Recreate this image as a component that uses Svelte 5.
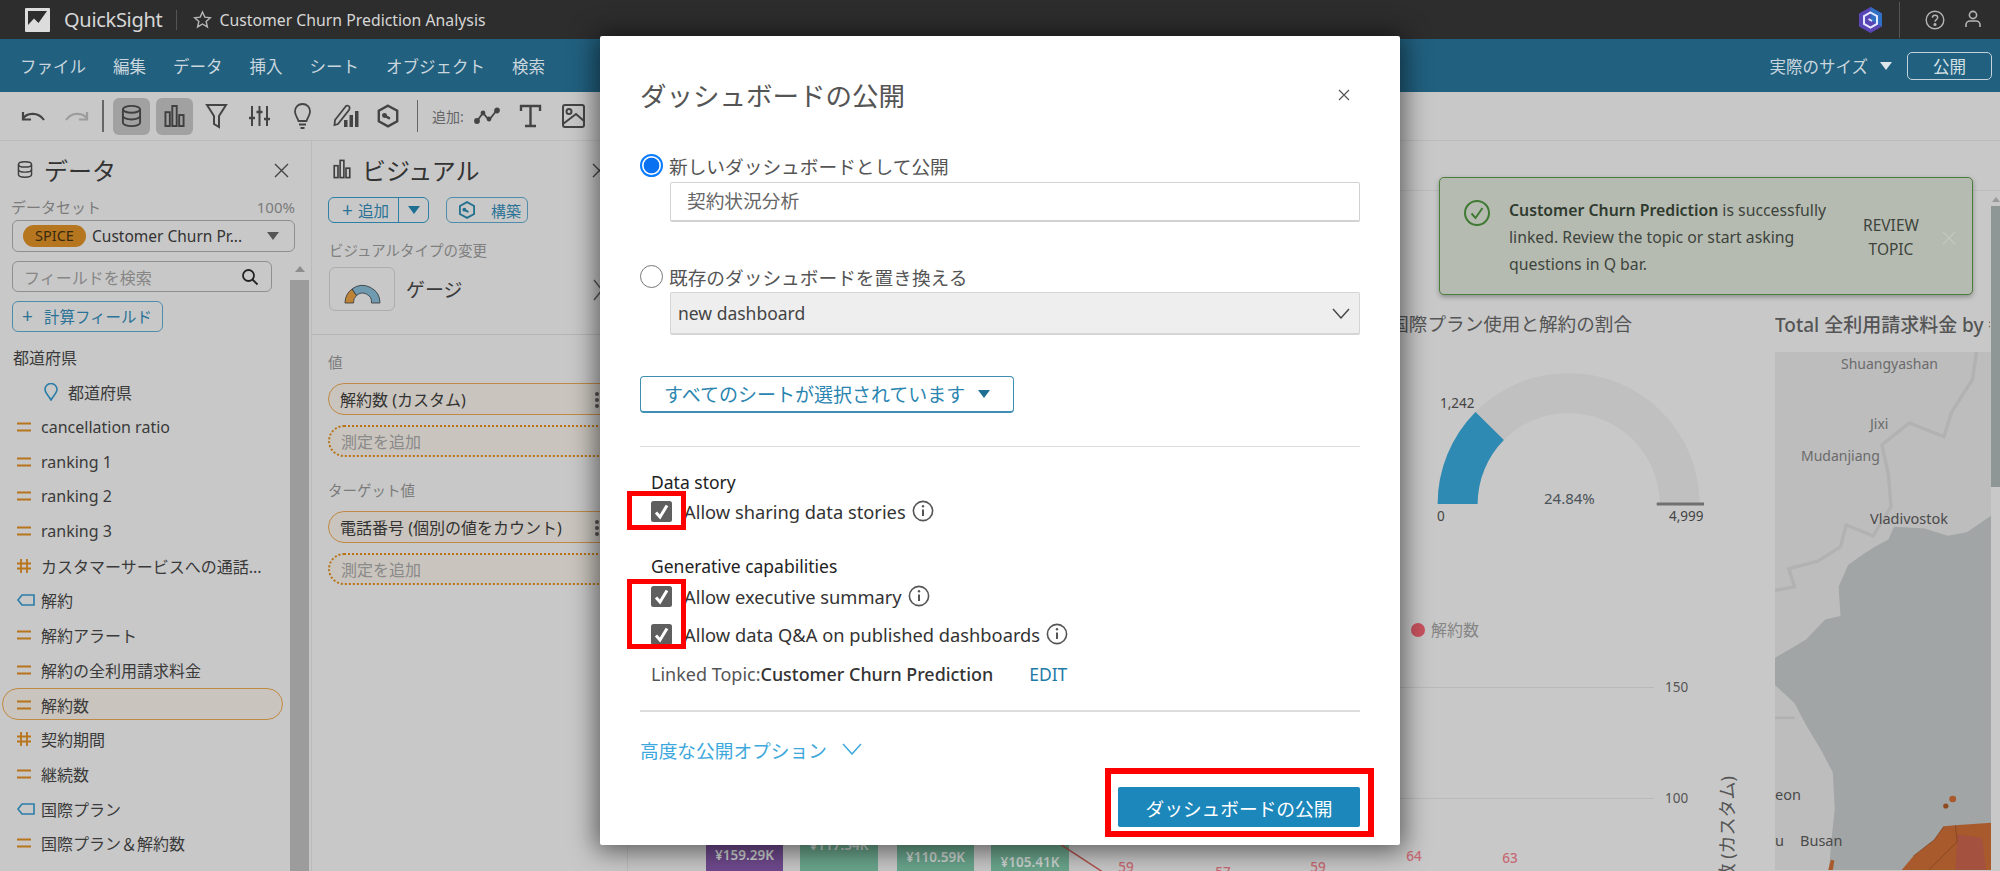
<script lang="ts">
  type Kind = 'pin' | 'eq' | 'hash' | 'tag'
  type Field = { kind: Kind; label: string; on?: boolean; sub?: boolean }

  const MENU = ['ファイル', '編集', 'データ', '挿入', 'シート', 'オブジェクト', '検索']

  const FIELDS: Field[] = [
    { kind: 'pin', label: '都道府県', sub: true },
    { kind: 'eq', label: 'cancellation ratio' },
    { kind: 'eq', label: 'ranking 1' },
    { kind: 'eq', label: 'ranking 2' },
    { kind: 'eq', label: 'ranking 3' },
    { kind: 'hash', label: 'カスタマーサービスへの通話...' },
    { kind: 'tag', label: '解約' },
    { kind: 'eq', label: '解約アラート' },
    { kind: 'eq', label: '解約の全利用請求料金' },
    { kind: 'eq', label: '解約数', on: true },
    { kind: 'hash', label: '契約期間' },
    { kind: 'eq', label: '継続数' },
    { kind: 'tag', label: '国際プラン' },
    { kind: 'eq', label: '国際プラン＆解約数' },
  ]

  // page coordinates, the canvas subtracts its own origin
  const BARS = [
    { x: 706, w: 77, c: '#6f4a8e', t: '¥159.29K', ty: 856 },
    { x: 800, w: 78, c: '#6aa58c', t: '¥117.54K', ty: 846 },
    { x: 897, w: 77, c: '#6aa58c', t: '¥110.59K', ty: 858 },
    { x: 991, w: 78, c: '#6aa58c', t: '¥105.41K', ty: 863 },
  ]
  const POINTS = [
    { x: 1126, y: 868, t: '59' },
    { x: 1223, y: 873, t: '57' },
    { x: 1318, y: 868, t: '59' },
    { x: 1414, y: 857, t: '64' },
    { x: 1510, y: 859, t: '63' },
  ]
  const AXIS = [
    { y: 688, t: '150' },
    { y: 799, t: '100' },
  ]
  const PLACES = [
    { x: 1841, y: 364, t: 'Shuangyashan', big: false },
    { x: 1870, y: 424, t: 'Jixi', big: false },
    { x: 1801, y: 456, t: 'Mudanjiang', big: false },
    { x: 1870, y: 519, t: 'Vladivostok', big: true },
    { x: 1775, y: 795, t: 'eon', big: true },
    { x: 1775, y: 841, t: 'u', big: true },
    { x: 1800, y: 841, t: 'Busan', big: true },
  ]
  const OX = 627
  const OY = 142
</script>

{#snippet hexIcon(size: number, color: string)}
  <svg width={size} height={size} viewBox="0 0 24 24" fill="none" stroke={color} stroke-width="2.2">
    <path d="M12 2.5 20.5 7.2v9.6L12 21.5 3.5 16.8V7.2z" />
    <path d="M8.5 11.5 13 14" stroke-linecap="round" />
    <circle cx="8.8" cy="11.6" r="1.2" fill={color} />
  </svg>
{/snippet}

{#snippet dbIcon(w: number, h: number)}
  <svg width={w} height={h} viewBox="0 0 22 24" fill="none" stroke="#3f3f3f" stroke-width="2">
    <ellipse cx="11" cy="5" rx="9" ry="3.6" />
    <path d="M2 5v14c0 2 4 3.6 9 3.6s9-1.6 9-3.6V5" />
    <path d="M2 12c0 2 4 3.6 9 3.6s9-1.6 9-3.6" />
  </svg>
{/snippet}

{#snippet barsIcon(w: number, h: number)}
  <svg width={w} height={h} viewBox="0 0 22 24" fill="none" stroke="#3f3f3f" stroke-width="2">
    <rect x="1.5" y="8" width="4.6" height="14.5" />
    <rect x="8.7" y="1.5" width="4.6" height="21" />
    <rect x="15.9" y="11" width="4.6" height="11.5" />
  </svg>
{/snippet}

{#snippet info()}
  <svg class="info" width="22" height="22" viewBox="0 0 22 22" fill="none" stroke="#555" stroke-width="1.6">
    <circle cx="11" cy="11" r="9.6" />
    <path d="M11 9.5v6.5" stroke-width="2" />
    <circle cx="11" cy="6.2" r="1.2" fill="#555" stroke="none" />
  </svg>
{/snippet}

{#snippet check()}
  <svg class="check" width="21" height="21" viewBox="0 0 21 21">
    <rect width="21" height="21" rx="2.5" fill="#5f5f5f" />
    <path d="M5 11.5 9 16 16 4.5" fill="none" stroke="#fff" stroke-width="3" />
  </svg>
{/snippet}

<div class="page">
  <header class="topbar">
    <svg class="logo" width="25" height="24" viewBox="0 0 25 24">
      <rect width="25" height="24" rx="1" fill="#dcdcdc" />
      <path d="M3 3h19L13.500 15 9 10.500 3 17z" fill="#2d2d2d" />
    </svg>
    <span class="brand">QuickSight</span>
    <span class="tsep"></span>
    <svg class="star" width="19" height="19" viewBox="0 0 24 24" fill="none" stroke="#b5b5b5" stroke-width="1.8">
      <path d="M12 2.500 14.900 9l7 .7-5.300 4.700 1.600 7L12 17.700 5.800 21.400l1.600-7L2.100 9.700l7-.7z" />
    </svg>
    <span class="doc">Customer Churn Prediction Analysis</span>
    <div class="top-right">
      <svg width="23" height="26" viewBox="0 0 23 26">
        <path d="M11.500 0 23 6.500v13L11.500 26 0 19.500v-13z" fill="#5a45b5" />
        <path d="M11.500 0 23 6.500v13l-11.500-6.500z" fill="#2f6fc4" />
        <path d="M11.500 5.500 18 9.200v7.600l-6.500 3.700L5 16.800V9.200z" fill="none" stroke="#e4e8ff" stroke-width="2" />
        <path d="M9.500 12 13 14" stroke="#e4e8ff" stroke-width="2" />
      </svg>
      <span class="tsep right"></span>
      <svg class="help" width="20" height="20" viewBox="0 0 20 20" fill="none" stroke="#b5b5b5" stroke-width="1.4">
        <circle cx="10" cy="10" r="8.800" />
        <path d="M7.400 7.800c0-1.500 1.200-2.500 2.700-2.500s2.600 1 2.600 2.300c0 2-2.700 2-2.700 4.200" />
        <circle cx="10" cy="14.500" r=".9" fill="#b5b5b5" />
      </svg>
      <svg class="user" width="18" height="20" viewBox="0 0 18 20" fill="none" stroke="#b5b5b5" stroke-width="1.6">
        <circle cx="9" cy="5" r="3.600" />
        <path d="M2 17v-2c0-2.500 2-4 4-4h6c2 0 4 1.500 4 4v2" />
      </svg>
    </div>
  </header>

  <nav class="menu">
    {#each MENU as m}<span>{m}</span>{/each}
    <span class="size">実際のサイズ</span>
    <i class="caret white"></i>
    <span class="publish">公開</span>
  </nav>

  <div class="toolbar">
    <svg class="slot" width="43" height="22" viewBox="0 0 43 22" fill="none" stroke="#444" stroke-width="2.2">
      <path d="M11 14c3-6 15-8 21 1" /><path d="M11 7v7.500h8" />
    </svg>
    <svg class="slot" width="43" height="22" viewBox="0 0 43 22" fill="none" stroke="#9c9c9c" stroke-width="2.2">
      <path d="M32 14c-3-6-15-8-21 1" /><path d="M32 7v7.500h-8" />
    </svg>
    <span class="vsep"></span>
    <span class="tool-on">{@render dbIcon(21, 24)}</span>
    <span class="tool-on second">{@render barsIcon(21, 24)}</span>
    <svg class="slot" width="43" height="26" viewBox="0 0 43 26" fill="none" stroke="#444" stroke-width="2">
      <path d="M12 2h19l-7 11v11l-5-3v-8z" />
    </svg>
    <svg class="slot" width="43" height="24" viewBox="0 0 43 24" fill="none" stroke="#444" stroke-width="2">
      <path d="M14 2v20M21.500 2v20M29 2v20" /><path d="M11 14h6M18.500 8h6M26 15h6" stroke-width="2.400" />
    </svg>
    <svg class="slot" width="43" height="28" viewBox="0 0 43 28" fill="none" stroke="#444" stroke-width="1.800">
      <path d="M21.500 2c-4.500 0-7.500 3.400-7.500 7.500 0 4 2.500 6 3.500 9.500h8c1-3.500 3.500-5.500 3.500-9.500C29 5.400 26 2 21.500 2z" />
      <path d="M18 22.500h7M19.500 26h4" />
    </svg>
    <svg class="slot" width="43" height="26" viewBox="0 0 43 26" fill="none" stroke="#444" stroke-width="1.800">
      <path d="M11 17 22 3c1-1 3 0 3.500 1s0 2-.5 3L14 21l-3.500 1z" />
      <rect x="20" y="17" width="3.500" height="7" fill="#444" stroke="none" />
      <rect x="25.500" y="12" width="3.500" height="12" fill="#444" stroke="none" />
      <rect x="31" y="8" width="3.500" height="16" fill="#444" stroke="none" />
    </svg>
    <span class="slot hex">{@render hexIcon(26, '#444')}</span>
    <span class="vsep two"></span>
    <span class="add-label">追加:</span>
    <svg class="slot first-add" width="43" height="18" viewBox="0 0 43 18" fill="none" stroke="#444" stroke-width="1.800">
      <path d="M11 14 17 6l6 7 8-10" />
      <circle cx="11" cy="14" r="2" fill="#444" /><circle cx="17" cy="6" r="1.500" fill="#444" /><circle cx="23" cy="12" r="1.500" fill="#444" /><circle cx="31" cy="3.500" r="2" fill="#444" />
    </svg>
    <svg class="slot" width="43" height="24" viewBox="0 0 43 24" fill="none" stroke="#444" stroke-width="2.400">
      <path d="M12 7V2h19v5M21.500 2v20M16 22h11" />
    </svg>
    <svg class="slot" width="43" height="26" viewBox="0 0 43 26" fill="none" stroke="#444" stroke-width="2">
      <rect x="11" y="2" width="21" height="22" rx="2" />
      <circle cx="17" cy="8.500" r="2.500" />
      <path d="M11 21 24 11l8 7" />
    </svg>
  </div>

  <main class="work">
    <aside class="data">
      <div class="pane-head">
        <span class="head-icon">{@render dbIcon(16, 19)}</span>
        <h2>データ</h2>
        <svg class="x" width="15" height="15" viewBox="0 0 15 15" stroke="#444" stroke-width="1.400"><path d="M1 1l13 13M14 1 1 14" /></svg>
      </div>
      <div class="ds-label"><span>データセット</span><span>100%</span></div>
      <div class="ds-select">
        <span class="spice">SPICE</span>
        <span class="ds-name">Customer Churn Pr...</span>
        <i class="caret gray"></i>
      </div>
      <div class="scroll-row">
        <div class="field-col">
          <div class="search">
            <span>フィールドを検索</span>
            <svg width="18" height="18" viewBox="0 0 18 18" fill="none" stroke="#222" stroke-width="1.800"><circle cx="7.500" cy="7.500" r="5.500" /><path d="m11.500 11.500 5 5" /></svg>
          </div>
          <div class="calc"><b>+</b><span>計算フィールド</span></div>
          <div class="group">都道府県</div>
          {#each FIELDS as f}
            <div class="row" class:on={f.on} class:sub={f.sub}>
              <span class="ficon">
                {#if f.kind === 'pin'}
                  <svg width="14" height="18" viewBox="0 0 14 18" fill="none" stroke="#2a7ea8" stroke-width="1.600"><path d="M7 17C4 12 1 9.500 1 6.500a6 6 0 0 1 12 0C13 9.500 10 12 7 17z" /></svg>
                {:else if f.kind === 'eq'}
                  <svg width="14" height="10" viewBox="0 0 14 10" stroke="#b8741a" stroke-width="2"><path d="M0 1.500h14M0 8.500h14" /></svg>
                {:else if f.kind === 'hash'}
                  <svg width="14" height="14" viewBox="0 0 14 14" stroke="#b8741a" stroke-width="1.800"><path d="M0 4.500h14M0 9.500h14M4 0v14M10 0v14" /></svg>
                {:else}
                  <svg width="18" height="12" viewBox="0 0 18 12" fill="none" stroke="#2a7ea8" stroke-width="1.600"><path d="M17 1H5L1 6l4 5h12z" /></svg>
                {/if}
              </span>
              <span>{f.label}</span>
            </div>
          {/each}
        </div>
        <div class="scrollbar"><i></i><b></b></div>
      </div>
    </aside>

    <section class="visual">
      <div class="pane-head vis">
        <span class="head-icon">{@render barsIcon(18, 20)}</span>
        <h2>ビジュアル</h2>
        <svg class="x" width="15" height="15" viewBox="0 0 15 15" stroke="#444" stroke-width="1.400"><path d="M1 1l13 13M14 1 1 14" /></svg>
      </div>
      <div class="vis-actions">
        <div class="split">
          <span class="split-main"><b>+</b> 追加</span>
          <span class="split-drop"><i class="caret teal"></i></span>
        </div>
        <div class="build">{@render hexIcon(20, '#23708f')}<span>構築</span></div>
      </div>
      <div class="vis-type-label">ビジュアルタイプの変更</div>
      <div class="vis-type">
        <div class="tile">
          <svg width="37" height="21" viewBox="0 0 37 21">
            <path d="M1 20A17.500 17.500 0 0 1 8 6l4.500 6.500A9 9 0 0 0 9.500 20z" fill="#bd8437" stroke="#333" stroke-width=".8" />
            <path d="M8 6A17.500 17.500 0 0 1 36 20h-8.500a9 9 0 0 0-15-7.500z" fill="#6f9ab0" stroke="#333" stroke-width=".8" />
          </svg>
        </div>
        <span class="type-name">ゲージ</span>
        <svg class="chev" width="10" height="22" viewBox="0 0 10 22" fill="none" stroke="#555" stroke-width="1.400"><path d="m1 1 8 10-8 10" /></svg>
      </div>
      <div class="wells">
        <div class="well-label">値</div>
        <div class="pill"><span>解約数 (カスタム)</span><i class="dots"></i></div>
        <div class="pill-add">測定を追加</div>
        <div class="well-label target">ターゲット値</div>
        <div class="pill"><span>電話番号 (個別の値をカウント)</span><i class="dots"></i></div>
        <div class="pill-add">測定を追加</div>
      </div>
    </section>

    <section class="canvas">
      <div class="canvas-strip"></div>
      <span class="canvas-edge"></span>

      {#each BARS as b}
        <div class="bar" style="left:{b.x - OX}px;width:{b.w}px;background:{b.c}"></div>
        <span class="bar-text" style="left:{b.x - OX}px;width:{b.w}px;top:{b.ty - OY}px">{b.t}</span>
      {/each}
      <svg class="trend" width="60" height="40" viewBox="0 0 60 40" fill="none" stroke="#b0544f" stroke-width="1.500"><path d="M0 0 58 38" /></svg>
      {#each POINTS as p}
        <span class="point" style="left:{p.x - OX}px;top:{p.y - OY}px">{p.t}</span>
      {/each}

      <h3 class="gauge-title">国際プラン使用と解約の割合</h3>
      <svg class="gauge" width="290" height="150" viewBox="1425 365 290 150">
        <path d="M1437.600 505A131 131 0 0 1 1699.600 505H1659.600A91 91 0 0 0 1477.600 505z" fill="#c0c0c0" />
        <path d="M1437.600 505A131 131 0 0 1 1475.500 412.900L1503.900 441A91 91 0 0 0 1477.600 505z" fill="#2e8ab2" />
        <path d="M1656.700 505H1704" stroke="#707070" stroke-width="3" />
      </svg>
      <span class="gauge-num first">1,242</span>
      <span class="gauge-num zero">0</span>
      <span class="gauge-num pct">24.84%</span>
      <span class="gauge-num max">4,999</span>

      <span class="legend-dot"></span>
      <span class="legend-text">解約数</span>

      {#each AXIS as a}
        <span class="grid-line" style="top:{a.y - OY}px"></span>
        <span class="axis-num" style="top:{a.y - OY}px">{a.t}</span>
      {/each}
      <span class="axis-title">解約数 (カスタム)</span>

      <h3 class="map-title">Total 全利用請求料金 by 都道府県</h3>
      <svg class="map" width="216" height="518" viewBox="979 145 564 1423" preserveAspectRatio="none">
        <rect x="979" y="145" width="564" height="1423" fill="#bdbdbd" />
        <path d="M1505 145 1495 220 1440 310 1420 378 1330 340 1258 400 1275 480 1282 570 1235 650 1165 620 1150 680 1090 720 1015 740 1030 790 979 800" fill="none" stroke="#b2b2b2" stroke-width="9" />
        <path d="M1543 595 1480 640 1430 650 1370 630 1290 625 1275 660 1240 680 1210 700 1170 730 1145 790 1150 870 1110 880 1060 935 1020 960 979 985V1060L1030 1110 1060 1170 1100 1240 1130 1300 1135 1400 1125 1500 1120 1568H1543z" fill="#a2a5a5" />
        <path d="M979 1150H1030" stroke="#b0b0b0" stroke-width="7" />
        <path d="M1543 1438 1450 1445 1420 1448 1395 1485 1340 1530 1310 1568H1543z" fill="#a85a2c" />
        <path d="M1455 1470 1520 1480 1530 1568H1450z" fill="#a5513f" />
        <path d="M1420 1448 1395 1485 1340 1530M1450 1445 1455 1490 1380 1568" fill="none" stroke="#7d431f" stroke-width="2" />
        <circle cx="1443" cy="1373" r="9" fill="#a85a2c" />
        <circle cx="1425" cy="1392" r="7" fill="#8f4a20" />
        <path d="M1118 1568 1125 1540 1134 1542 1130 1568z" fill="#a85a2c" />
      </svg>
      {#each PLACES as p}
        <span class="place" class:big={p.big} style="left:{p.x - OX}px;top:{p.y - OY}px">{p.t}</span>
      {/each}
      <div class="page-scroll"><i></i><b></b></div>

      <div class="toast">
        <svg width="26" height="26" viewBox="0 0 26 26" fill="none" stroke="#3f7a33" stroke-width="2">
          <circle cx="13" cy="13" r="12" />
          <path d="m7.500 13.500 4 4.500 7-10" />
        </svg>
        <p><b>Customer Churn Prediction</b> is successfully linked. Review the topic or start asking questions in Q bar.</p>
        <span class="review">REVIEW TOPIC</span>
        <svg class="toast-x" width="14" height="14" viewBox="0 0 14 14" stroke="#c3c8c0" stroke-width="1.200"><path d="m1 1 12 12M13 1 1 13" /></svg>
      </div>
    </section>
  </main>

  <div class="modal">
    <div class="modal-head">
      <h1>ダッシュボードの公開</h1>
      <svg width="12" height="12" viewBox="0 0 12 12" stroke="#555" stroke-width="1.200"><path d="m1 1 10 10M11 1 1 11" /></svg>
    </div>

    <label class="radio-line"><span class="radio picked"></span>新しいダッシュボードとして公開</label>
    <div class="text-input">契約状況分析</div>

    <label class="radio-line second"><span class="radio"></span>既存のダッシュボードを置き換える</label>
    <div class="select-input">
      <span>new dashboard</span>
      <svg width="18" height="11" viewBox="0 0 18 11" fill="none" stroke="#444" stroke-width="1.400"><path d="m1 1 8 9 8-9" /></svg>
    </div>

    <div class="sheets"><span>すべてのシートが選択されています</span><i class="caret teal"></i></div>

    <hr class="first-rule" />

    <div class="opts">
      <div class="opt-title">Data story</div>
      <div class="opt">{@render check()}<span>Allow sharing data stories</span>{@render info()}</div>
      <div class="opt-title gen">Generative capabilities</div>
      <div class="opt">{@render check()}<span>Allow executive summary</span>{@render info()}</div>
      <div class="opt next">{@render check()}<span>Allow data Q&amp;A on published dashboards</span>{@render info()}</div>
      <div class="linked">
        <span class="lt">Linked Topic:</span><span class="ln">Customer Churn Prediction</span>
        <span class="edit">EDIT</span>
      </div>
    </div>

    <hr class="second-rule" />

    <div class="advanced">
      <span>高度な公開オプション</span>
      <svg width="20" height="12" viewBox="0 0 20 12" fill="none" stroke="#3ea8dc" stroke-width="1.500"><path d="m1 1 9 10 9-10" /></svg>
    </div>

    <div class="actions"><span class="go">ダッシュボードの公開</span></div>

    <span class="mark one"></span>
    <span class="mark two"></span>
    <span class="mark three"></span>
  </div>
</div>

<style>
  :global(body) { margin: 0; background: #c8c8c8; }
  .page {
    position: relative;
    width: 2000px;
    height: 871px;
    overflow: hidden;
    background: #c8c8c8;
    color: #3a3a3a;
    font-family: "Noto Sans", "Noto Sans CJK JP", sans-serif;
    font-size: 16px;
    display: flex;
    flex-direction: column;
  }

  .topbar {
    height: 39px;
    flex: none;
    background: #2d2d2d;
    display: flex;
    align-items: center;
    color: #d6d6d6;
  }
  .logo { margin-left: 25px; }
  .brand { margin-left: 14px; font-size: 20px; letter-spacing: -.3px; }
  .tsep { width: 1px; height: 20px; background: #555; margin-left: 14px; }
  .star { margin-left: 16px; }
  .doc { margin-left: 7px; font-size: 15.800px; }
  .top-right { margin-left: auto; display: flex; align-items: center; padding-right: 18px; }
  .tsep.right { height: 36px; margin-left: 17px; }
  .help { margin-left: 25px; }
  .user { margin-left: 19px; }

  .menu {
    height: 53px;
    flex: none;
    background: #21607f;
    display: flex;
    align-items: center;
    gap: 27px;
    padding-left: 20px;
    color: #c9d6dd;
    font-size: 16.500px;
    box-sizing: border-box;
  }
  .size { margin-left: auto; margin-right: -15px; }
  .publish {
    width: 85px;
    height: 28px;
    border: 1px solid #c3d3dc;
    border-radius: 5px;
    box-sizing: border-box;
    display: flex;
    align-items: center;
    justify-content: center;
    margin: 0 8px 0 -12px;
    color: #d6e0e6;
  }
  .caret { display: inline-block; width: 0; height: 0; border-left: 6.500px solid transparent; border-right: 6.500px solid transparent; border-top: 8px solid; }
  .caret.white { color: #dfe7eb; }
  .caret.gray { color: #555; }
  .caret.teal { color: #1f6f92; }

  .toolbar {
    height: 49px;
    flex: none;
    display: flex;
    align-items: center;
    padding-left: 12px;
    box-sizing: border-box;
    border-bottom: 1px solid #bcbcbc;
  }
  .slot { width: 43px; flex: none; display: flex; justify-content: center; }
  .vsep { width: 1.500px; height: 32px; background: #666; margin: 0 9px 0 4px; flex: none; }
  .vsep.two { margin: 0 14px 0 7px; }
  .tool-on {
    width: 37px;
    height: 37px;
    border-radius: 6px;
    background: #a1a1a1;
    display: flex;
    align-items: center;
    justify-content: center;
    flex: none;
  }
  .tool-on.second { margin: 0 2px 0 6px; }
  .add-label { font-size: 14px; color: #666; width: 34px; }
  .first-add { margin-left: 0; }

  .work { flex: 1; display: flex; min-height: 0; }

  .pane-head { height: 56px; display: flex; align-items: center; padding-left: 17px; position: relative; }
  .pane-head h2 { margin: 0 0 0 11px; font-size: 24px; font-weight: 400; color: #333; }
  .head-icon { display: flex; }
  .x { position: absolute; left: 274px; top: 22px; }

  .data { width: 312px; flex: none; box-sizing: border-box; border-right: 1px solid #bbb; }
  .ds-label {
    display: flex;
    justify-content: space-between;
    width: 284px;
    margin-left: 11px;
    font-size: 15px;
    height: 23px;
    line-height: 20px;
    color: #7b7b7b;
  }
  .ds-select {
    margin-left: 12px;
    width: 283px;
    height: 32px;
    box-sizing: border-box;
    border: 1px solid #8f8f8f;
    border-radius: 6px;
    display: flex;
    align-items: center;
    padding-left: 10px;
  }
  .spice {
    width: 63px;
    height: 22px;
    line-height: 21px;
    text-align: center;
    border-radius: 11px;
    background: #b5761f;
    font-size: 14.500px;
    color: #3a2a10;
    flex: none;
  }
  .ds-name { margin-left: 6px; font-size: 15.500px; color: #333; flex: 1; white-space: nowrap; }
  .ds-select .caret { margin-right: 15px; }

  .scroll-row { display: flex; margin-top: 9px; height: 610px; overflow: hidden; }
  .field-col { width: 290px; flex: none; }
  .search {
    margin-left: 12px;
    width: 260px;
    height: 31px;
    box-sizing: border-box;
    border: 1px solid #8f8f8f;
    border-radius: 6px;
    display: flex;
    align-items: center;
    justify-content: space-between;
    padding: 0 12px 0 11px;
    color: #868686;
    font-size: 16px;
  }
  .calc {
    margin: 9px 0 0 12px;
    width: 151px;
    height: 31px;
    box-sizing: border-box;
    border: 1px solid #4f8cab;
    border-radius: 6px;
    display: flex;
    align-items: center;
    padding-left: 9px;
    gap: 11px;
    font-size: 15.500px;
    color: #2a7397;
  }
  .calc b { font-weight: 400; font-size: 19px; line-height: 1; }
  .group { margin: 8px 0 0 13px; height: 35px; line-height: 36px; color: #3a3a3a; }
  .row {
    height: 34.700px;
    display: flex;
    align-items: center;
    white-space: nowrap;
    color: #3a3a3a;
    box-sizing: border-box;
    padding-left: 17px;
    position: relative;
  }
  .row.sub { padding-left: 44px; }
  .row.on::before {
    content: "";
    position: absolute;
    left: 2px;
    top: 1px;
    width: 281px;
    height: 32px;
    box-sizing: border-box;
    border: 1px solid #c08a45;
    border-radius: 16px;
    background: #c9c4bd;
  }
  .ficon { width: 24px; flex: none; display: flex; align-items: center; position: relative; }
  .row.sub .ficon { width: 24px; }
  .row span:last-child { position: relative; }
  .scrollbar { width: 19px; flex: none; position: relative; }
  .scrollbar i { position: absolute; left: 5px; top: 5px; border-left: 5px solid transparent; border-right: 5px solid transparent; border-bottom: 6px solid #8e8e8e; }
  .scrollbar b { position: absolute; left: 0; right: 0; top: 19px; bottom: 0; background: #9c9c9c; }

  .visual { width: 315px; flex: none; }
  .pane-head.vis { padding-left: 21px; }
  .pane-head.vis .x { left: 280px; }
  .vis-actions { display: flex; gap: 17px; margin: 0 0 0 16px; height: 26px; }
  .split { display: flex; width: 101px; border: 1px solid #2d7fa5; border-radius: 6px; box-sizing: border-box; color: #2a7397; font-size: 15.500px; }
  .split-main { width: 70px; border-right: 1px solid #2d7fa5; display: flex; align-items: center; gap: 5px; padding-left: 13px; box-sizing: border-box; white-space: nowrap; }
  .split-main b { font-weight: 400; font-size: 19px; }
  .split-drop { flex: 1; display: flex; align-items: center; justify-content: center; }
  .build { width: 82px; border: 1px solid #4f8cab; border-radius: 6px; box-sizing: border-box; display: flex; align-items: center; padding-left: 10px; gap: 14px; color: #2a7397; font-size: 15px; }
  .vis-type-label { margin: 17px 0 0 17px; font-size: 14.500px; color: #7f7f7f; line-height: 20px; }
  .vis-type { display: flex; align-items: center; margin: 7px 0 0 17px; position: relative; }
  .tile { width: 66px; height: 44px; box-sizing: border-box; border: 1px solid #adadad; border-radius: 6px; display: flex; align-items: center; justify-content: center; padding-top: 8px; }
  .type-name { margin-left: 11px; font-size: 19px; color: #3a3a3a; }
  .chev { position: absolute; left: 264px; top: 12px; }
  .wells { margin-top: 23px; border-top: 1px solid #b5b5b5; padding: 17px 0 0 16px; }
  .well-label { font-size: 14.500px; color: #7b7b7b; line-height: 20px; height: 21px; }
  .well-label.target { margin-top: 23px; }
  .pill {
    height: 32px;
    width: 290px;
    margin-top: 11px;
    box-sizing: border-box;
    border: 1px solid #c08a45;
    border-radius: 16px;
    background: #c9c4bd;
    display: flex;
    align-items: center;
    padding-left: 11px;
    font-size: 16px;
    color: #333;
    position: relative;
  }
  .well-label + .pill { margin-top: 10px; }
  .dots { position: absolute; left: 266px; top: 8px; width: 4px; height: 4px; border-radius: 2px; background: #555; box-shadow: 0 6px 0 #555, 0 12px 0 #555; }
  .pill-add {
    height: 32px;
    width: 290px;
    margin-top: 10px;
    box-sizing: border-box;
    border: 2px dotted #b8741a;
    border-radius: 16px;
    background: #c9c4bd;
    display: flex;
    align-items: center;
    padding-left: 11px;
    font-size: 16px;
    color: #8a8a8a;
  }

  .canvas { flex: 1; position: relative; min-width: 0; }
  .canvas-strip { height: 49px; border-bottom: 1px solid #bdbdbd; }
  .canvas-edge { position: absolute; left: 0; top: 50px; bottom: 0; width: 1px; background: #bbb; }
  .bar { position: absolute; top: 660px; bottom: 0; }
  .bar-text { position: absolute; text-align: center; transform: translateY(-50%); font-size: 13.500px; font-weight: 600; color: #cfd6d2; }
  .trend { position: absolute; left: 433px; top: 703px; }
  .point { position: absolute; transform: translate(-50%, -50%); font-size: 13.500px; font-weight: 500; color: #c96a74; }

  .gauge-title { position: absolute; right: 368px; top: 168px; margin: 0; font-size: 18.600px; font-weight: 400; color: #555; line-height: 30px; white-space: nowrap; }
  .gauge { position: absolute; left: 798px; top: 223px; }
  .gauge-num { position: absolute; font-size: 13.500px; color: #444; line-height: 18px; }
  .first { left: 813px; top: 253px; }
  .zero { left: 810px; top: 366px; }
  .pct { left: 917px; top: 348px; font-size: 15px; color: #4b5358; }
  .max { left: 1042px; top: 366px; }
  .legend-dot { position: absolute; left: 784px; top: 482px; width: 14px; height: 14px; border-radius: 50%; background: #c9535f; }
  .legend-text { position: absolute; left: 804px; top: 477px; font-size: 16px; line-height: 24px; color: #858585; }
  .grid-line { position: absolute; left: 773px; width: 254px; height: 1px; background: #b9b9b9; }
  .axis-num { position: absolute; left: 1038px; transform: translateY(-50%); font-size: 13.500px; color: #555; }
  .axis-title { position: absolute; left: 1088px; top: 635px; writing-mode: vertical-rl; text-orientation: sideways; transform: rotate(180deg); font-size: 18px; line-height: 24px; color: #555; white-space: nowrap; }

  .map-title { position: absolute; left: 1148px; top: 169px; margin: 0; width: 215px; overflow: hidden; white-space: nowrap; font-size: 19px; font-weight: 500; color: #555; line-height: 30px; }
  .map { position: absolute; left: 1148px; top: 211px; }
  .place { position: absolute; transform: translateY(-50%); font-size: 14px; color: #6b6b6b; }
  .place.big { color: #4a4a4a; font-size: 14.500px; }
  .page-scroll { position: absolute; right: 0; top: 50px; width: 9px; bottom: 0; }
  .page-scroll i { position: absolute; left: 1px; top: 6px; border-left: 4px solid transparent; border-right: 4px solid transparent; border-bottom: 5px solid #9a9a9a; }
  .page-scroll b { position: absolute; left: 0; right: 0; top: 15px; height: 281px; background: #8f9696; }

  .toast {
    position: absolute;
    left: 812px;
    top: 36px;
    width: 534px;
    height: 118px;
    box-sizing: border-box;
    background: #b6bbb2;
    border: 1px solid #4a7e3b;
    border-radius: 5px;
    box-shadow: 0 2px 5px rgba(0, 0, 0, .3);
    display: flex;
    align-items: flex-start;
    padding: 21px 0 0 24px;
    font-size: 15.800px;
    color: #3d443c;
  }
  .toast svg:first-child { flex: none; margin-top: 1px; }
  .toast p { margin: -2px 0 0 19px; width: 328px; line-height: 27px; }
  .toast b { font-weight: 600; color: #2f3a2e; }
  .review { width: 90px; margin: 14px 0 0 9px; text-align: center; line-height: 24px; font-size: 15.500px; flex: none; }
  .toast-x { position: absolute; left: 502px; top: 53px; }

  .modal {
    position: absolute;
    left: 600px;
    top: 36px;
    width: 800px;
    height: 809px;
    box-sizing: border-box;
    padding: 0 40px;
    background: #fff;
    box-shadow: 0 2px 26px 4px rgba(0, 0, 0, .55);
    border-radius: 2px;
    color: #555;
    font-size: 18.700px;
  }
  .modal-head { height: 118px; display: flex; align-items: center; justify-content: space-between; padding-right: 10px; margin-bottom: 0; box-sizing: border-box; padding-bottom: 1px; }
  .modal-head h1 { margin: 0; font-size: 26.500px; font-weight: 400; color: #555; }
  .radio-line { display: flex; align-items: center; height: 23px; gap: 6px; }
  .radio-line.second { margin-top: 43px; }
  .radio { width: 23px; height: 23px; box-sizing: border-box; border-radius: 50%; border: 1.500px solid #777; flex: none; }
  .radio.picked { border: 2px solid #0a7cff; background: radial-gradient(circle, #0a72f0 0 7.500px, #fff 8.200px); }
  .text-input {
    margin: 5px 0 0 30px;
    height: 40px;
    box-sizing: border-box;
    border: 1px solid #d2d2d2;
    border-bottom-width: 2px;
    border-radius: 2px;
    padding-left: 16px;
    line-height: 36px;
    color: #666;
  }
  .select-input {
    margin: 4px 0 0 30px;
    height: 43px;
    box-sizing: border-box;
    border: 1px solid #d5d5d5;
    border-bottom-width: 2px;
    border-radius: 2px;
    background: #eee;
    padding: 0 9px 0 7px;
    display: flex;
    align-items: center;
    justify-content: space-between;
    font-size: 17.500px;
    color: #444;
  }
  .sheets {
    margin-top: 41px;
    width: 374px;
    height: 37px;
    box-sizing: border-box;
    border: 1px solid #3f8eb3;
    border-bottom-width: 2px;
    border-radius: 4px;
    display: flex;
    align-items: center;
    padding-left: 23px;
    gap: 13px;
    font-size: 19px;
    color: #2a85b0;
    white-space: nowrap;
  }
  hr { border: 0; height: 1px; background: #dcdcdc; margin: 0; }
  .first-rule { margin-top: 33px; }
  .second-rule { height: 2px; margin-top: 0; }
  .opts { padding-left: 11px; height: 263px; box-sizing: border-box; padding-top: 22px; color: #222; font-size: 17.500px; }
  .opt-title { line-height: 26px; color: #222; }
  .opt-title.gen { margin-top: 30px; }
  .opt { display: flex; align-items: center; height: 24px; margin-top: 4px; white-space: nowrap; color: #333; font-size: 18.300px; }
  .opt-title.gen + .opt { margin-top: 5px; }
  .opt.next { margin-top: 14px; }
  .opt > span { margin-left: 12px; }
  .check { flex: none; }
  .info { margin-left: 6px; flex: none; }
  .linked { display: flex; align-items: center; margin-top: 15px; height: 26px; font-size: 18px; white-space: nowrap; }
  .lt { color: #555; font-size: 18px; }
  .ln { color: #333; font-weight: 500; font-size: 17.900px; }
  .edit { margin-left: 36px; color: #1e7ba8; font-size: 17.500px; }
  .advanced { margin-top: 24px; display: flex; align-items: center; gap: 15px; color: #3ea8dc; height: 26px; }
  .actions { display: flex; justify-content: flex-end; margin-top: 25px; }
  .go { width: 242px; height: 40px; background: #1b87bb; border-radius: 2px; color: #fff; display: flex; align-items: center; justify-content: center; }
  .mark { position: absolute; box-sizing: border-box; pointer-events: none; border: 5px solid #f00; }
  .mark.one { left: 27px; top: 455px; width: 59px; height: 39px; }
  .mark.two { left: 27px; top: 543px; width: 59px; height: 70px; }
  .mark.three { left: 505px; top: 732px; width: 269px; height: 69px; border-width: 6px; }
</style>
